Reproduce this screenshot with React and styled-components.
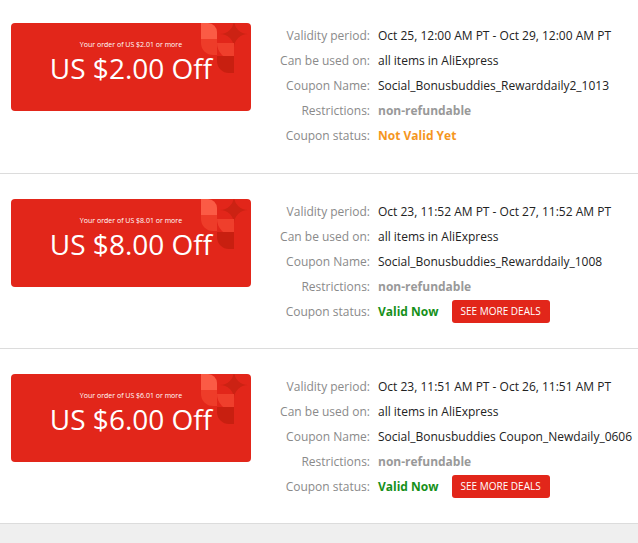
import React from 'react';
import styled, { createGlobalStyle } from 'styled-components';

const GlobalStyle = createGlobalStyle`
  html, body {
    margin: 0;
    padding: 0;
    background: #efefef;
    font-family: "Open Sans", "Liberation Sans", sans-serif;
  }
`;

const Section = styled.div`
  display: flex;
  align-items: flex-start;
  background: #fff;
  padding: 25px 0 24px 11px;
  border-bottom: 1px solid #dcdcdc;

  &:first-child {
    padding-top: 23px;
    padding-bottom: 25px;
  }
`;

const Card = styled.div`
  position: relative;
  flex: none;
  width: 240px;
  height: 88px;
  box-sizing: border-box;
  padding-top: 17px;
  border-radius: 4px;
  background: #e2261a;
  color: #fff;
  display: flex;
  flex-direction: column;
  align-items: center;
  overflow: hidden;
`;

const Deco = styled.svg`
  position: absolute;
  top: 0;
  right: 0;
`;

const MinOrder = styled.div`
  position: relative;
  font-size: 7px;
  line-height: 10px;
`;

const Amount = styled.div`
  position: relative;
  font-size: 28px;
  line-height: 36px;
`;

const Info = styled.div`
  display: grid;
  grid-template-columns: 100px auto;
  column-gap: 8px;
  margin-left: 19px;
  font-size: 12px;
  line-height: 25px;
`;

const Label = styled.div`
  text-align: right;
  color: #8a8a8a;
  white-space: nowrap;
`;

const Value = styled.div`
  display: flex;
  align-items: center;
  white-space: nowrap;
  color: ${({ tone }) =>
    tone === 'muted' ? '#999' : tone === 'wait' ? '#f5961e' : tone === 'ok' ? '#16901a' : '#222'};
  font-weight: ${({ tone }) => (tone ? 700 : 400)};
`;

const DealsButton = styled.button`
  margin-left: 13px;
  height: 23px;
  padding: 0 9px;
  border: none;
  border-radius: 3px;
  background: #e2261a;
  color: #fff;
  font-family: inherit;
  font-size: 10px;
  font-weight: 400;
  line-height: 23px;
  cursor: pointer;
`;

// four-point star made of quarter-circle cut-outs
const star = (cx, cy, r) =>
  `M${cx} ${cy - r} A${r} ${r} 0 0 0 ${cx + r} ${cy} A${r} ${r} 0 0 0 ${cx} ${cy + r} A${r} ${r} 0 0 0 ${cx - r} ${cy} A${r} ${r} 0 0 0 ${cx} ${cy - r} Z`;

const CardDeco = () => (
  <Deco width="51" height="51" viewBox="0 0 51 51">
    <path d="M1 0 H8 A9 9 0 0 1 17 9 V16 H1 Z" fill="#fb5b45" />
    <path d="M1 16 H17 V32 H13 A12 12 0 0 1 1 20 Z" fill="#ee3c29" />
    <path d={star(34, 11, 14)} fill="#cc2213" />
    <path d="M17 20 H34 V37 A17 17 0 0 1 17 20 Z" fill="#ef3f2c" />
    <path d="M17 33 H34 V50 H29 A12 12 0 0 1 17 38 Z" fill="#c81f10" />
  </Deco>
);

const coupons = [
  {
    min: 'US $2.01',
    off: 'US $2.00',
    period: 'Oct 25, 12:00 AM PT - Oct 29, 12:00 AM PT',
    name: 'Social_Bonusbuddies_Rewarddaily2_1013',
    valid: false,
  },
  {
    min: 'US $8.01',
    off: 'US $8.00',
    period: 'Oct 23, 11:52 AM PT - Oct 27, 11:52 AM PT',
    name: 'Social_Bonusbuddies_Rewarddaily_1008',
    valid: true,
  },
  {
    min: 'US $6.01',
    off: 'US $6.00',
    period: 'Oct 23, 11:51 AM PT - Oct 26, 11:51 AM PT',
    name: 'Social_Bonusbuddies Coupon_Newdaily_0606',
    valid: true,
  },
];

const App = () => (
  <>
    <GlobalStyle />
    <div>
      {coupons.map((c) => (
        <Section key={c.name}>
          <Card>
            <CardDeco />
            <MinOrder>Your order of {c.min} or more</MinOrder>
            <Amount>{c.off} Off</Amount>
          </Card>
          <Info>
            <Label>Validity period:</Label>
            <Value>{c.period}</Value>
            <Label>Can be used on:</Label>
            <Value>all items in AliExpress</Value>
            <Label>Coupon Name:</Label>
            <Value>{c.name}</Value>
            <Label>Restrictions:</Label>
            <Value tone="muted">non-refundable</Value>
            <Label>Coupon status:</Label>
            <Value tone={c.valid ? 'ok' : 'wait'}>
              {c.valid ? 'Valid Now' : 'Not Valid Yet'}
              {c.valid && <DealsButton>SEE MORE DEALS</DealsButton>}
            </Value>
          </Info>
        </Section>
      ))}
    </div>
  </>
);

export default App;
